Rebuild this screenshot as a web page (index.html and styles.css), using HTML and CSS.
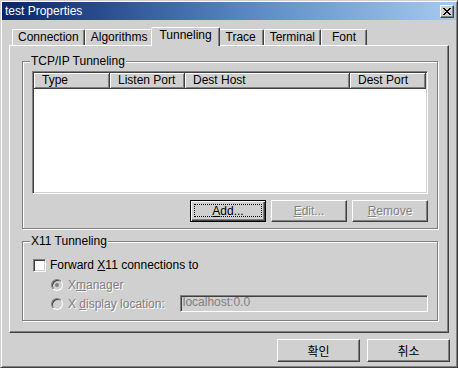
FILE: index.html
```html
<!DOCTYPE html>
<html lang="ko">
<head>
    <meta charset="UTF-8">
    <meta name="viewport" content="width=device-width, initial-scale=1.0">
    <title>test Properties</title>
    <link rel="stylesheet" href="styles.css">
</head>
<body>
    <div class="window">
        <div class="title-bar">
            <span class="title-text">test Properties</span>
            <button class="close-button">
                <svg width="8" height="7" viewBox="0 0 8 7" shape-rendering="crispEdges">
                    <path d="M0 0h2v1h-2zM1 1h2v1h-2zM2 2h2v1h-2zM3 3h2v1h-2zM2 4h2v1h-2zM1 5h2v1h-2zM0 6h2v1h-2z" fill="#000"></path>
                    <path d="M6 0h2v1h-2zM5 1h2v1h-2zM4 2h2v1h-2zM4 4h2v1h-2zM5 5h2v1h-2zM6 6h2v1h-2z" fill="#000"></path>
                </svg>
            </button>
        </div>
        <div class="dialog-body">
            <div class="tab-strip">
                <span class="tab">Connection</span>
                <span class="tab">Algorithms</span>
                <span class="tab tab-active">Tunneling</span>
                <span class="tab">Trace</span>
                <span class="tab">Terminal</span>
                <span class="tab">Font</span>
            </div>
            <div class="tab-panel">
                <div class="group">
                    <div class="group-title">TCP/IP Tunneling</div>
                    <div class="list-view">
                        <div class="list-header">
                            <span class="col col-type">Type</span>
                            <span class="col col-listen">Listen Port</span>
                            <span class="col col-host">Dest Host</span>
                            <span class="col col-port">Dest Port</span>
                        </div>
                    </div>
                    <div class="group-buttons">
                        <button class="button button-default"><span class="focus-ring"><u>A</u>dd...</span></button>
                        <button class="button" disabled><u>E</u>dit...</button>
                        <button class="button" disabled><u>R</u>emove</button>
                    </div>
                </div>
                <div class="group group-x11">
                    <div class="group-title">X11 Tunneling</div>
                    <div class="check-row">
                        <span class="checkbox"></span>
                        <span>Forward <u>X</u>11 connections to</span>
                    </div>
                    <div class="radio-row">
                        <span class="radio radio-checked"></span>
                        <span class="disabled-text">X<u>m</u>anager</span>
                    </div>
                    <div class="radio-row radio-row-display">
                        <span class="radio"></span>
                        <span class="disabled-text">X <u>d</u>isplay location:</span>
                        <span class="text-box">localhost:0.0</span>
                    </div>
                </div>
            </div>
            <div class="dialog-buttons">
                <button class="button dialog-button">확인</button>
                <button class="button dialog-button">취소</button>
            </div>
        </div>
    </div>
</body>
</html>
```

FILE: styles.css
```css
body {
    margin: 0;
    font-family: "Liberation Sans", Arial, "Noto Sans CJK KR", sans-serif;
    font-size: 12px;
    background-color: #d0d0d0;
}
.window {
    width: 458px;
    height: 368px;
    box-sizing: border-box;
    padding: 1px;
    background-color: #d0d0d0;
    border: 1px solid;
    border-color: #d0d0d0 #404040 #404040 #d0d0d0;
    box-shadow: inset 1px 1px 0 #fff, inset -1px -1px 0 #808080;
}
.title-bar {
    height: 18px;
    display: flex;
    align-items: center;
    justify-content: space-between;
    padding: 0 2px 0 3px;
    background: linear-gradient(to right, #0a246a, #5a8ac4 55%, #a6caf0);
}
.title-text {
    color: #fff;
    line-height: 14px;
}
.close-button {
    width: 14px;
    height: 13px;
    padding: 0;
    display: flex;
    align-items: center;
    justify-content: center;
    background-color: #d0d0d0;
    border: 1px solid;
    border-color: #fff #404040 #404040 #fff;
    box-shadow: inset -1px -1px 0 #808080;
}
.dialog-body {
    padding: 7px 7px 0 7px;
}
.tab-strip {
    display: flex;
    align-items: flex-end;
    height: 18px;
    padding-left: 3px;
}
.tab {
    position: relative;
    height: 16px;
    min-width: 46px;
    box-sizing: border-box;
    padding: 0 5px;
    line-height: 14px;
    text-align: center;
    border: 1px solid;
    border-bottom: none;
    border-color: #fff #404040 transparent #fff;
    border-radius: 2px 2px 0 0;
    box-shadow: inset -1px 0 0 #808080;
}
.tab-active {
    height: 19px;
    margin: 0 -2px -1px -2px;
    padding: 0 7px;
    line-height: 14px;
    background-color: #d0d0d0;
    z-index: 1;
}
.tab-panel {
    height: 288px;
    box-sizing: border-box;
    padding: 15px 10px 0 12px;
    border: 1px solid;
    border-color: #fff #404040 #404040 #fff;
    box-shadow: inset -1px -1px 0 #808080;
}
.group {
    padding: 0 9px 6px 9px;
    border: 1px solid #808080;
    box-shadow: 1px 1px 0 #fff, inset 1px 1px 0 #fff;
}
.group-title {
    width: fit-content;
    margin: -8px 0 0 -2px;
    padding: 0 1px;
    line-height: 14px;
    background-color: #d0d0d0;
}
.list-view {
    height: 123px;
    margin-top: 3px;
    box-sizing: border-box;
    background-color: #fff;
    border: 1px solid;
    border-color: #808080 #fff #fff #808080;
    box-shadow: inset 1px 1px 0 #404040, inset -1px -1px 0 #d0d0d0;
    padding: 1px;
}
.list-header {
    display: flex;
    height: 16px;
}
.col {
    box-sizing: border-box;
    padding-left: 8px;
    line-height: 14px;
    background-color: #d0d0d0;
    border-right: 1px solid #404040;
    border-bottom: 1px solid #404040;
    box-shadow: inset 1px 1px 0 #fff, inset -1px -1px 0 #808080;
}
.col-type {
    width: 76px;
}
.col-listen {
    width: 75px;
}
.col-host {
    width: 165px;
}
.col-port {
    width: 76px;
}
.group-buttons {
    display: flex;
    justify-content: flex-end;
    gap: 5px;
    margin-top: 6px;
}
.button {
    width: 76px;
    height: 22px;
    padding: 0;
    font: inherit;
    color: #000;
    background-color: #d0d0d0;
    border: 1px solid;
    border-color: #fff #404040 #404040 #fff;
    box-shadow: inset -1px -1px 0 #808080;
}
.button:disabled {
    color: #808080;
    text-shadow: 1px 1px 0 #fff;
}
.button-default {
    display: flex;
    padding: 3px;
    border-color: #000;
    box-shadow: inset 1px 1px 0 #fff, inset -1px -1px 0 #404040, inset -2px -2px 0 #808080;
}
.focus-ring {
    flex: 1;
    line-height: 12px;
    border: 1px dotted #000;
    margin-bottom: 1px;
}
.group-x11 {
    margin-top: 12px;
    padding-bottom: 8px;
}
.check-row {
    display: flex;
    align-items: center;
    gap: 4px;
    height: 14px;
    margin-top: 10px;
    padding-left: 1px;
}
.checkbox {
    width: 13px;
    height: 13px;
    box-sizing: border-box;
    background-color: #fff;
    border: 1px solid;
    border-color: #808080 #fff #fff #808080;
    box-shadow: inset 1px 1px 0 #404040, inset -1px -1px 0 #d0d0d0;
}
.radio-row {
    display: flex;
    align-items: center;
    gap: 5px;
    height: 14px;
    margin-top: 6px;
    padding-left: 19px;
}
.radio-row-display {
    height: 17px;
    margin-top: 3px;
}
.radio {
    width: 12px;
    height: 12px;
    box-sizing: border-box;
    display: flex;
    align-items: center;
    justify-content: center;
    border-radius: 50%;
    background-color: #d0d0d0;
    border: 1px solid;
    border-color: #808080 #fff #fff #808080;
    box-shadow: inset 1px 1px 0 #404040;
}
.radio-checked::after {
    content: "";
    width: 4px;
    height: 4px;
    border-radius: 50%;
    background-color: #808080;
}
.disabled-text {
    color: #808080;
    text-shadow: 1px 1px 0 #fff;
    line-height: 14px;
}
.text-box {
    flex: 1;
    height: 17px;
    box-sizing: border-box;
    margin-left: 10px;
    padding-left: 2px;
    line-height: 13px;
    color: #808080;
    background-color: #d0d0d0;
    border: 1px solid;
    border-color: #808080 #fff #fff #808080;
    box-shadow: inset 1px 1px 0 #404040, inset -1px -1px 0 #d0d0d0;
}
.dialog-buttons {
    display: flex;
    justify-content: flex-end;
    gap: 7px;
    margin: 6px -1px 0 0;
}
.dialog-button {
    width: 83px;
    height: 23px;
    font-family: "Noto Sans CJK KR", sans-serif;
}
```
